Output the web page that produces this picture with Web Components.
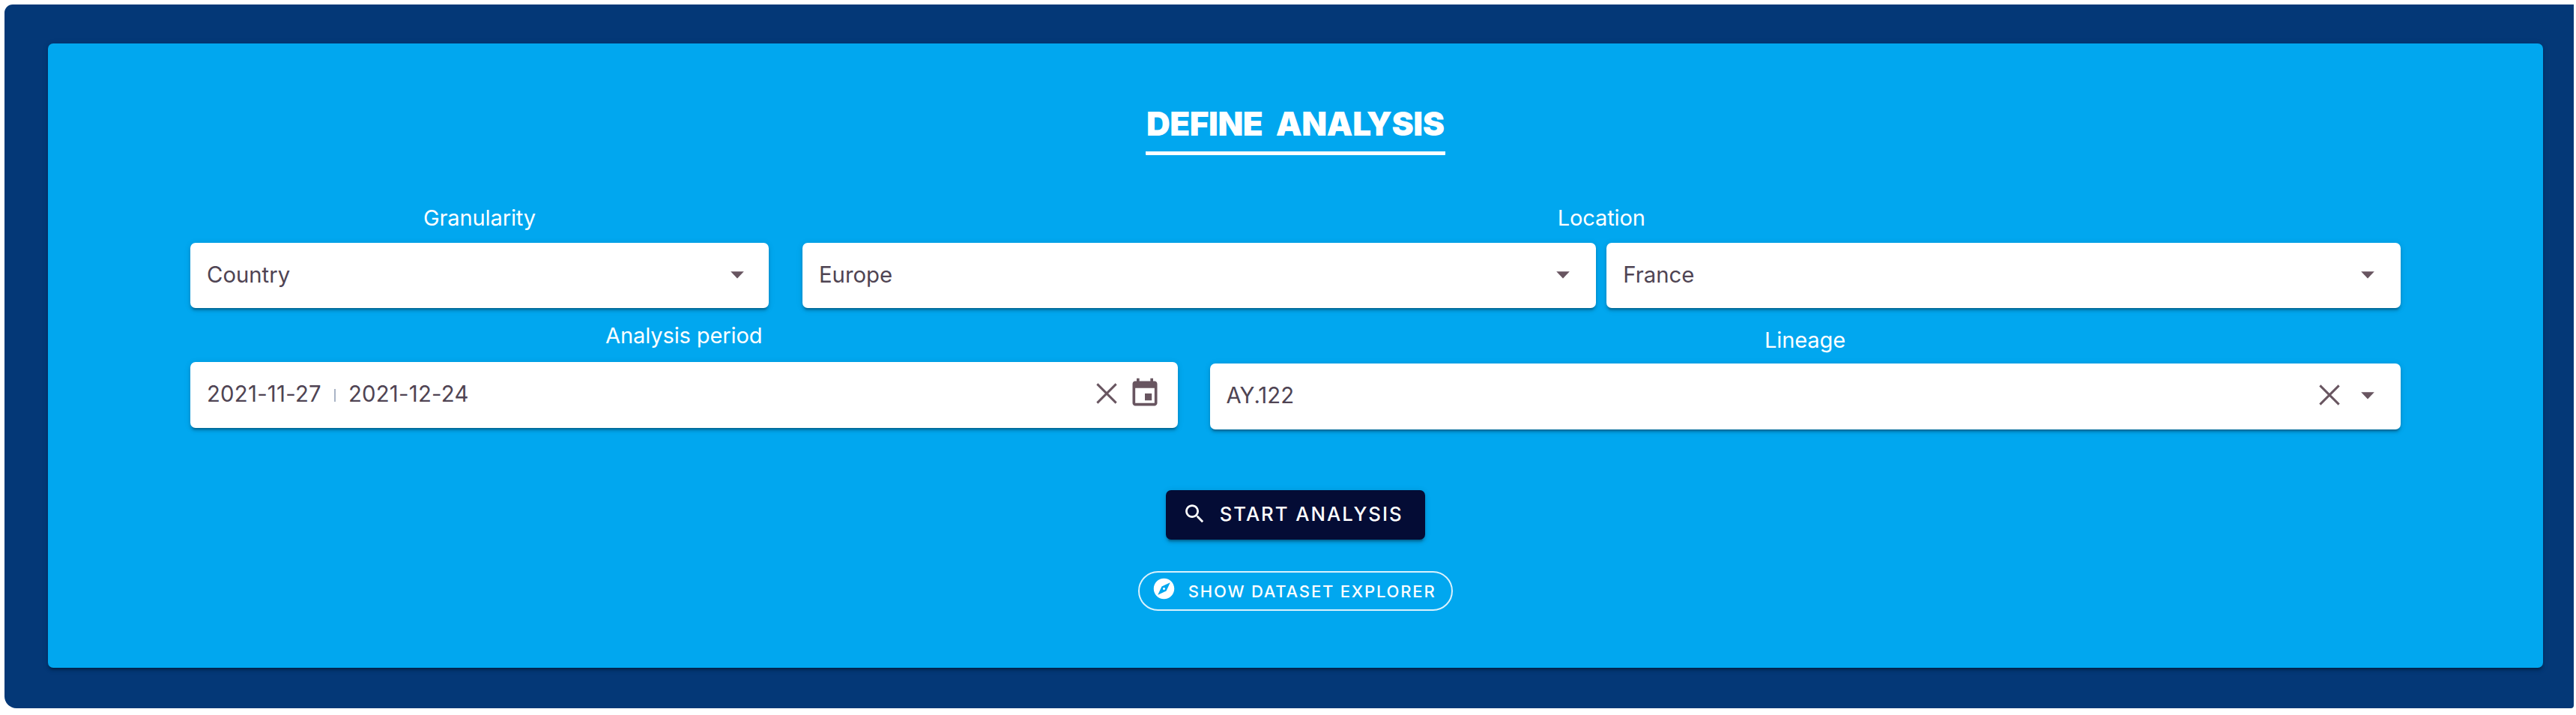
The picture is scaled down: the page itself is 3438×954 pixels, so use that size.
<!DOCTYPE html>
<html lang="en">
<head>
<meta charset="utf-8">
<title>Define analysis</title>
<style>
html,body{margin:0;background:#fff}
body{font-family:Inter,"Liberation Sans",sans-serif;font-size:29.3px;color:#fff;padding:6px 3px 0 6px;height:948px;box-sizing:border-box;overflow:hidden}
</style>
</head>
<body>
<analysis-page></analysis-page>
<script>
const define = (name, css, html) => customElements.define(name, class extends HTMLElement {
  constructor() {
    super();
    this.attachShadow({ mode: 'open' }).innerHTML = `<style>:host,*{box-sizing:border-box}${css}</style>${html}`;
  }
});

const icons = {
  down: [44, '0 0 24 24', '<path d="M7.2 10l4.8 5 4.8-5z"/>'],
  close: [44, '0 0 24 24', '<path d="M5.1 5.1 18.9 18.9M18.9 5.1 5.1 18.9" fill="none" stroke="currentColor" stroke-width="1.6"/>'],
  calendar: [44, '0 0 24 24', '<path d="M19 3h-1V1h-2v2H8V1H6v2H5c-1.11 0-1.99.9-1.99 2L3 19c0 1.1.89 2 2 2h14c1.1 0 2-.9 2-2V5c0-1.1-.9-2-2-2zm0 16H5V8h14v11zM17 12h-5v5h5z"/>'],
  search: [33, '0 0 24 24', '<path d="M15.5 14h-.79l-.28-.27C15.41 12.59 16 11.11 16 9.5 16 5.91 13.09 3 9.5 3S3 5.91 3 9.5 5.91 16 9.5 16c1.61 0 3.09-.59 4.23-1.57l.27.28v.79l5 4.99L20.49 19l-4.99-5zm-6 0C7.01 14 5 11.99 5 9.5S7.01 5 9.5 5 14 7.01 14 9.5 11.99 14 9.5 14z"/>'],
  explore: [33, '0 0 24 24', '<path d="M12 10.9c-.61 0-1.1.49-1.1 1.1s.49 1.1 1.1 1.1 1.1-.49 1.1-1.1-.49-1.1-1.1-1.1zM12 2C6.48 2 2 6.48 2 12s4.48 10 10 10 10-4.48 10-10S17.52 2 12 2zm2.19 12.19L6 18l3.81-8.19L18 6l-3.81 8.19z"/>']
};
customElements.define('ui-icon', class extends HTMLElement {
  connectedCallback() {
    const [size, box, shape] = icons[this.getAttribute('name')];
    this.attachShadow({ mode: 'open' }).innerHTML =
      `<style>:host{display:block;flex:none}svg{display:block;fill:currentColor}</style>
       <svg width="${size}" height="${size}" viewBox="${box}">${shape}</svg>`;
  }
});

define('form-group',
  `:host{display:flex;flex-direction:column}
   .label{height:var(--label-height,51px);line-height:36px;text-align:center;font-size:29px;letter-spacing:-.1px}
   .controls{display:flex;gap:14px}
   ::slotted(*){flex:1}`,
  `<div class="label"><slot name="label"></slot></div><div class="controls"><slot></slot></div>`);

define('select-field',
  `:host{display:flex;align-items:center;height:87.3px;padding:0 22px;background:#fff;color:#4f4453;border-radius:7px;
     box-shadow:0 5.5px 2px -3.7px rgba(0,0,0,.2),0 3.7px 3.7px rgba(0,0,0,.14),0 1.8px 9px rgba(0,0,0,.12)}
   .value{flex:1;display:flex;align-items:center;white-space:pre;padding-bottom:3px}
   .tools{display:flex;align-items:center;gap:7px;color:#685560;padding-bottom:3px}`,
  `<div class="value"><slot></slot></div><div class="tools"><slot name="tools"></slot></div>`);

define('range-separator',
  `:host{display:block;width:2px;height:17px;margin:4px 17px 0 17px;background:#a9b4c6}`, ``);

define('section-title',
  `:host{display:block;width:400px;height:71px;padding-top:2px;border-bottom:5.5px solid #fff;border-radius:1px;font-size:44px;font-weight:900;
     line-height:54px;text-align:center;white-space:nowrap;word-spacing:9px;letter-spacing:-.45px}`,
  `<slot></slot>`);

define('start-button',
  `:host{display:flex;align-items:center;width:346px;height:66px;padding:0 0 3px 22px;gap:17px;border-radius:7px;background:#040c35;
     font-size:25.7px;font-weight:500;letter-spacing:2px;white-space:nowrap;
     box-shadow:0 5.5px 2px -3.7px rgba(0,0,0,.2),0 3.7px 3.7px rgba(0,0,0,.14),0 1.8px 9px rgba(0,0,0,.12)}`,
  `<ui-icon name="search"></ui-icon><slot></slot>`);

define('explorer-button',
  `:host{display:flex;align-items:center;width:420px;height:53px;padding:0 0 0 16px;gap:15.5px;border-radius:27px;border:2px solid #d9f2fd;
     font-size:22px;font-weight:500;letter-spacing:1.8px;white-space:nowrap}
   ui-icon{margin-bottom:7px}`,
  `<ui-icon name="explore"></ui-icon><slot></slot>`);

define('analysis-page',
  `:host{display:block;height:938.5px;padding:52.3px 41.5px 0 58px;background:#043877;border-radius:11px 0 4px 16px}
   main{height:832.5px;border-radius:7px;background:#01a7ef;display:flex;flex-direction:column;align-items:center;padding-top:78.2px;
     box-shadow:0 5.5px 2px -3.7px rgba(0,0,0,.2),0 3.7px 3.7px rgba(0,0,0,.14),0 1.8px 9px rgba(0,0,0,.12)}
   .row{display:flex;align-self:stretch;margin:0 190px}
   .first{margin-top:65.5px;gap:45px}
   .second{margin-top:19px;gap:43px;align-items:flex-start}
   .granularity{width:772px}
   .granularity ui-icon{margin-right:-1.5px}
   .period{width:1317.5px;--label-height:53px}
   .period select-field{letter-spacing:.25px}
   .lineage{flex:1;padding-top:6px;--label-height:49px}
   .location{flex:1}
   start-button{margin-top:81.5px}
   explorer-button{margin-top:42px;margin-left:1px}`,
  `<main>
    <section-title>DEFINE ANALYSIS</section-title>
    <div class="row first">
      <form-group class="granularity"><span slot="label">Granularity</span>
        <select-field>Country<ui-icon slot="tools" name="down"></ui-icon></select-field></form-group>
      <form-group class="location"><span slot="label">Location</span>
        <select-field>Europe<ui-icon slot="tools" name="down"></ui-icon></select-field>
        <select-field>France<ui-icon slot="tools" name="down"></ui-icon></select-field></form-group>
    </div>
    <div class="row second">
      <form-group class="period"><span slot="label">Analysis period</span>
        <select-field>2021-11-27<range-separator></range-separator>2021-12-24<ui-icon slot="tools" name="close"></ui-icon><ui-icon slot="tools" name="calendar"></ui-icon></select-field></form-group>
      <form-group class="lineage"><span slot="label">Lineage</span>
        <select-field>AY.122<ui-icon slot="tools" name="close"></ui-icon><ui-icon slot="tools" name="down"></ui-icon></select-field></form-group>
    </div>
    <start-button>START ANALYSIS</start-button>
    <explorer-button>SHOW DATASET EXPLORER</explorer-button>
  </main>`);
</script>
</body>
</html>
